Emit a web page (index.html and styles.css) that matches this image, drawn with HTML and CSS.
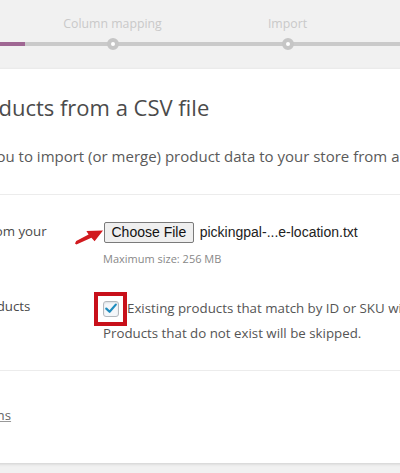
FILE: index.html
```html
<!DOCTYPE html>
<html lang="en">
<head>
<meta charset="utf-8">
<title>Import products</title>
<link rel="stylesheet" href="styles.css">
</head>
<body>
<ol class="steps">
  <li class="step step-done"><span class="step-label">Upload CSV file</span><span class="step-bar"></span></li>
  <li class="step"><span class="step-label">Column mapping</span><span class="step-bar"></span></li>
  <li class="step"><span class="step-label">Import</span><span class="step-bar"></span></li>
  <li class="step"><span class="step-label">Done!</span><span class="step-bar"></span></li>
</ol>

<form class="card">
  <header class="card-header">
    <h2 class="title">Import products from a CSV file</h2>
    <p class="intro">This tool allows you to import (or merge) product data to your store from a CSV or TXT file.</p>
  </header>

  <section class="card-body">
    <div class="row">
      <div class="row-label">Choose a CSV file from your computer:</div>
      <div class="row-field">
        <div class="file-line">
          <svg class="arrow" width="29" height="19" viewBox="0 0 29 19" aria-hidden="true">
            <polygon points="0,17.4 1.2,15 13.6,8.4 11.4,5 28,4.4 19.6,15.2 16.4,11.8 1.4,18.6" fill="#d11a1f"/>
          </svg>
          <button type="button" class="file-btn">Choose File</button>
          <span class="file-name">pickingpal-...e-location.txt</span>
        </div>
        <div class="hint">Maximum size: 256 MB</div>
      </div>
    </div>
    <div class="row row-second">
      <div class="row-label">Update existing products</div>
      <div class="row-field">
        <div class="check-line">
          <span class="check-box">
            <svg width="12" height="11" viewBox="0 0 12 11" aria-hidden="true">
              <path d="M1.3 5.6 L4.6 8.8 L10.8 1.6" fill="none" stroke="#1e8cbe" stroke-width="2.2" stroke-linecap="round" stroke-linejoin="round"/>
            </svg>
          </span>
          <label class="check-text">Existing products that match by ID or SKU will be updated.</label>
        </div>
        <div class="check-note">Products that do not exist will be skipped.</div>
      </div>
    </div>
  </section>

  <section class="card-actions">
    <a class="advanced" href="#">Show advanced options</a>
  </section>
</form>
</body>
</html>
```

FILE: styles.css
```css
html, body {
  margin: 0;
  padding: 0;
}

body {
  width: 400px;
  height: 473px;
  overflow: hidden;
  background: #f1f1f1;
  font-family: "Open Sans", "Noto Sans", sans-serif;
  color: #555;
}

/* progress steps */
.steps {
  list-style: none;
  margin: 0 0 0 -150px;
  padding: 15px 0 0;
  height: 69px;
  box-sizing: border-box;
  display: flex;
}

.step {
  flex: 0 0 175px;
  display: flex;
  flex-direction: column;
  align-items: stretch;
}

.step-label {
  display: block;
  height: 18px;
  line-height: 18px;
  font-size: 12.3px;
  color: #c9c9c9;
  text-align: center;
  white-space: nowrap;
}

.step-bar {
  position: relative;
  display: block;
  height: 4px;
  margin-top: 9px;
  background: #cacaca;
}

.step-bar::before {
  content: "";
  position: absolute;
  left: 50%;
  top: 50%;
  width: 4px;
  height: 4px;
  margin: -6px 0 0 -6px;
  border: 4px solid #c6c6c6;
  border-radius: 50%;
  background: #fff;
}

.step-done .step-bar {
  background: #9f6793;
}

.step-done .step-bar::before {
  border-color: #9f6793;
}

/* card */
.card {
  display: block;
  width: 800px;
  margin: 0 0 0 -149px;
  background: #fff;
  box-shadow: 0 1px 3px rgba(0, 0, 0, 0.15);
}

.card-header {
  padding: 24.2px 24px 25.8px 36px;
}

.title {
  margin: 0;
  font-size: 22px;
  line-height: 28px;
  font-weight: 400;
  color: #4b4b4b;
  white-space: nowrap;
}

.intro {
  margin: 23px 0 0 -9px;
  font-size: 15px;
  line-height: 24px;
  color: #5a5a5a;
  white-space: nowrap;
}

.card-body {
  border-top: 1px solid #ececec;
  padding: 26px 24px 23.5px 24px;
  display: flex;
  flex-direction: column;
  gap: 29.5px;
}

.row {
  display: grid;
  grid-template-columns: 218px 1fr;
  column-gap: 10px;
  align-items: start;
}

.row-label {
  font-size: 13.3px;
  line-height: 20px;
  color: #4a4a4a;
}

.row-field {
  font-size: 13.3px;
  color: #555;
}

.file-line {
  position: relative;
  display: flex;
  align-items: center;
  margin-top: 1px;
  height: 21px;
}

.arrow {
  position: absolute;
  left: -28px;
  top: 4px;
}

.file-btn {
  height: 21px;
  margin: 0 0 0 1px;
  padding: 0 6.5px;
  border: 1px solid #7a7a7a;
  border-radius: 2px;
  background: #efefef;
  font-family: "Liberation Sans", Arial, sans-serif;
  font-size: 14px;
  line-height: 19px;
  color: #111;
}

.file-name {
  margin-left: 6px;
  font-family: "Liberation Sans", Arial, sans-serif;
  font-size: 14px;
  color: #222;
  white-space: nowrap;
}

.hint {
  margin-top: 8px;
  font-size: 11px;
  line-height: 16px;
  color: #888;
  white-space: nowrap;
}

.check-line {
  display: flex;
  align-items: center;
  height: 25px;
}

.check-box {
  position: relative;
  flex: 0 0 auto;
  box-sizing: border-box;
  width: 16px;
  height: 16px;
  display: flex;
  align-items: center;
  justify-content: center;
  border: 1px solid #b4b9be;
  border-radius: 3px;
  background: #f4f7fa;
  box-shadow: inset 0 1px 2px rgba(0, 0, 0, 0.1);
  margin-right: 8px;
}

/* red annotation frame drawn over the checkbox */
.check-box::after {
  content: "";
  position: absolute;
  top: -10px;
  right: -9px;
  bottom: -10px;
  left: -10px;
  border: 4px solid #c8101a;
}

.check-text {
  line-height: 25px;
  white-space: nowrap;
}

.check-note {
  line-height: 25px;
  white-space: nowrap;
}

.card-actions {
  border-top: 1px solid #ececec;
  padding: 32px 24px 38px 13px;
}

.advanced {
  display: inline-block;
  font-size: 13.3px;
  line-height: 20px;
  color: #666;
  text-decoration: underline;
  text-decoration-color: #999;
}
```
